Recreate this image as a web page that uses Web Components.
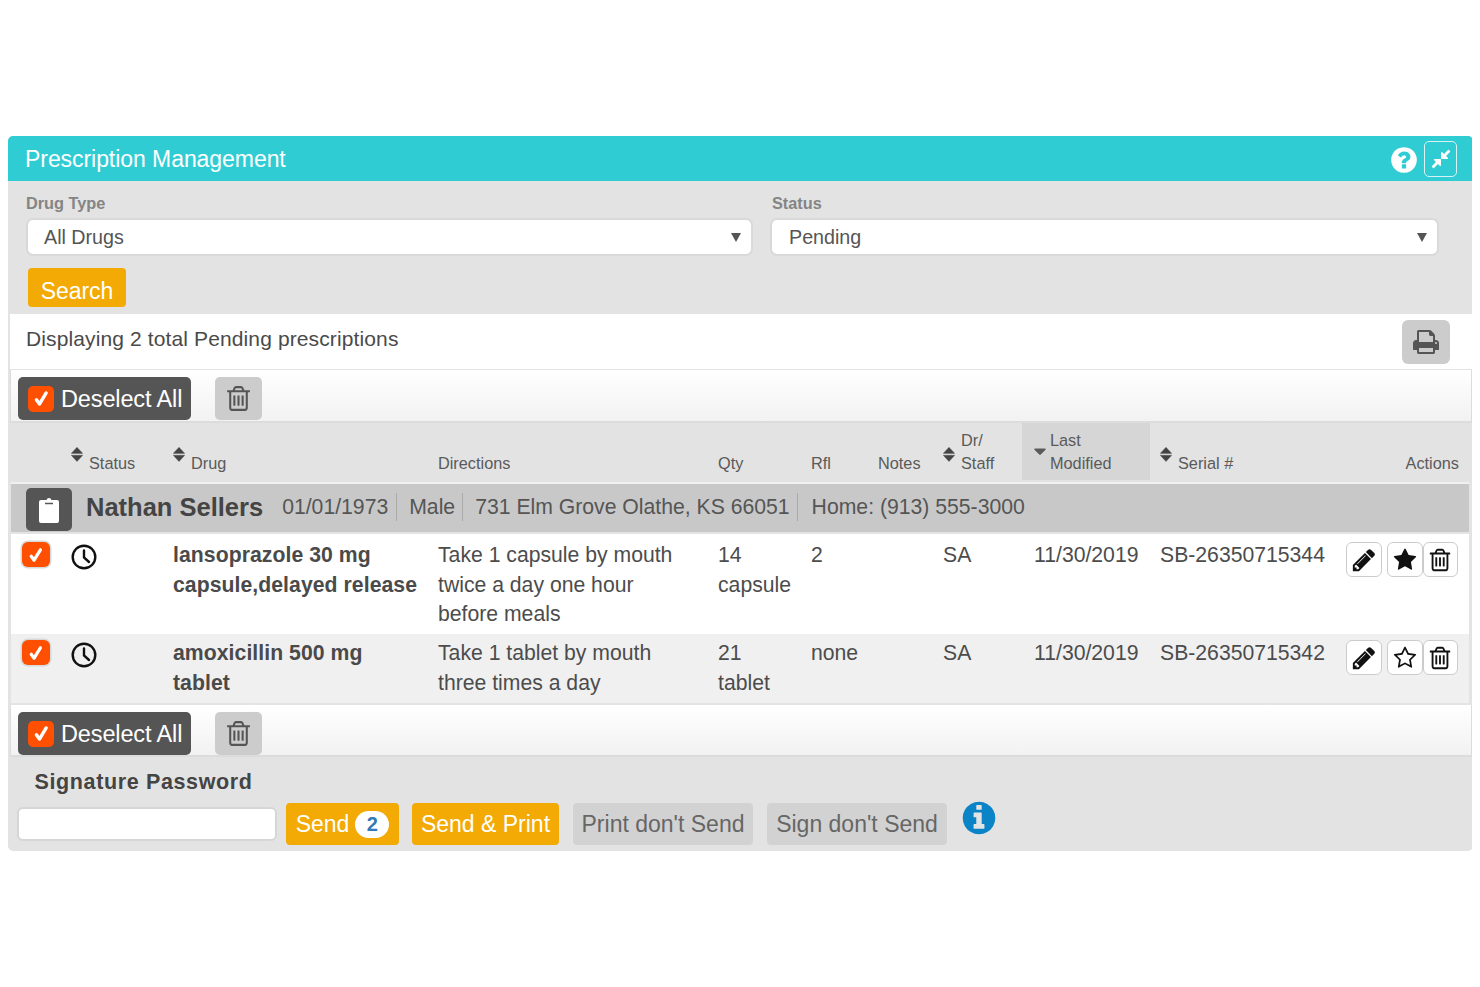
<!DOCTYPE html>
<html><head><meta charset="utf-8"><title>Prescription Management</title>
<style>
html,body{background:#fff}
body{margin:8px;font-family:"Liberation Sans",Arial,sans-serif;color:#444}
rx-panel{margin-top:128px}
</style></head><body>
<rx-panel title-text="Prescription Management">
  <rx-filters></rx-filters>
  <rx-summary text="Displaying 2 total Pending prescriptions"></rx-summary>
  <rx-toolbar></rx-toolbar>
  <rx-thead></rx-thead>
  <rx-patient name="Nathan Sellers" dob="01/01/1973" sex="Male" addr="731 Elm Grove Olathe, KS 66051" phone="Home: (913) 555-3000"></rx-patient>
  <rx-row drug="lansoprazole 30 mg capsule,delayed release" dir="Take 1 capsule by mouth twice a day one hour before meals" qty="14 capsule" rfl="2" staff="SA" date="11/30/2019" serial="SB-26350715344" star="star" h="100"></rx-row>
  <rx-row drug="amoxicillin 500 mg tablet" dir="Take 1 tablet by mouth three times a day" qty="21 tablet" rfl="none" staff="SA" date="11/30/2019" serial="SB-26350715342" star="star-o" h="69" alt></rx-row>
  <rx-toolbar second></rx-toolbar>
  <rx-footer></rx-footer>
</rx-panel>
<script>
const P={
pencil:"M491 1536l91-91-235-235-91 91v107h128v128h107zm523-928q0-22-22-22-10 0-17 7l-542 542q-7 7-7 17 0 22 22 22 10 0 17-7l542-542q7-7 7-17zm-54-192l416 416-832 832h-416v-416zm683 96q0 53-37 90l-166 166-416-416 166-165q36-38 90-38 53 0 91 38l235 234q37 39 37 91z",
star:"M1728 647q0 22-26 48l-363 354 86 500q1 7 1 20 0 21-10.5 35.5t-30.5 14.5q-19 0-40-12l-449-236-449 236q-22 12-40 12-21 0-31.5-14.5t-10.5-35.5q0-6 2-20l86-500-364-354q-25-27-25-48 0-37 56-46l502-73 225-455q19-41 49-41t49 41l225 455 502 73q56 9 56 46z",
"star-o":"M1201 1004l306-297-422-62-189-382-189 382-422 62 306 297-73 421 378-199 377 199zm527-357q0 22-26 48l-363 354 86 500q1 7 1 20 0 50-41 50-19 0-40-12l-449-236-449 236q-22 12-40 12-21 0-31.5-14.5t-10.5-35.5q0-6 2-20l86-500-364-354q-25-27-25-48 0-37 56-46l502-73 225-455q19-41 49-41t49 41l225 455 502 73q56 9 56 46z",
trash:"M704 736v576q0 14-9 23t-23 9h-64q-14 0-23-9t-9-23v-576q0-14 9-23t23-9h64q14 0 23 9t9 23zm256 0v576q0 14-9 23t-23 9h-64q-14 0-23-9t-9-23v-576q0-14 9-23t23-9h64q14 0 23 9t9 23zm256 0v576q0 14-9 23t-23 9h-64q-14 0-23-9t-9-23v-576q0-14 9-23t23-9h64q14 0 23 9t9 23zm128 724v-948h-896v948q0 22 7 40.5t14.5 27 10.5 8.5h832q3 0 10.5-8.5t14.5-27 7-40.5zm-672-1076h448l-48-117q-7-9-17-11h-317q-10 2-17 11zm928 32v64q0 14-9 23t-23 9h-96v948q0 83-47 143.5t-113 60.5h-832q-66 0-113-58.5t-47-141.5v-952h-96q-14 0-23-9t-9-23v-64q0-14 9-23t23-9h309l70-167q15-37 54-63t79-26h320q40 0 79 26t54 63l70 167h309q14 0 23 9t9 23z",
print:"M448 1536h896v-256h-896v256zm0-640h896v-384h-160q-40 0-68-28t-28-68v-160h-640v640zm1152 64q0-26-19-45t-45-19-45 19-19 45 19 45 45 19 45-19 19-45zm128 0v416q0 13-9.5 22.5t-22.5 9.5h-224v160q0 40-28 68t-68 28h-960q-40 0-68-28t-28-68v-160h-224q-13 0-22.5-9.5t-9.5-22.5v-416q0-79 56.5-135.5t135.5-56.5h64v-544q0-40 28-68t68-28h672q40 0 88 20t76 48l152 152q28 28 48 76t20 88v256h64q79 0 135.5 56.5t56.5 135.5z",
question:"M1024 1376v-192q0-14-9-23t-23-9h-192q-14 0-23 9t-9 23v192q0 14 9 23t23 9h192q14 0 23-9t9-23zm256-672q0-88-55.5-163t-138.5-116-170-41q-243 0-371 213-15 24 8 42l132 100q7 6 19 6 16 0 25-12 53-68 86-92 34-24 86-24 48 0 85.5 26t37.5 59q0 38-20 61t-68 45q-63 28-115.5 86.5t-52.5 125.5v36q0 14 9 23t23 9h192q14 0 23-9t9-23q0-19 21.5-49.5t54.5-49.5q32-18 49-28.5t46-35 44.5-48 28-60.5 12.5-81zm384 192q0 209-103 385.5t-279.5 279.5-385.5 103-385.5-103-279.5-279.5-103-385.5 103-385.5 279.5-279.5 385.5-103 385.5 103 279.5 279.5 103 385.5z",
info:"M1152 1376v-160q0-14-9-23t-23-9h-96v-512q0-14-9-23t-23-9h-320q-14 0-23 9t-9 23v160q0 14 9 23t23 9h96v320h-96q-14 0-23 9t-9 23v160q0 14 9 23t23 9h448q14 0 23-9t9-23zm-128-896v-160q0-14-9-23t-23-9h-192q-14 0-23 9t-9 23v160q0 14 9 23t23 9h192q14 0 23-9t9-23zm640 416q0 209-103 385.5t-279.5 279.5-385.5 103-385.5-103-279.5-279.5-103-385.5 103-385.5 279.5-279.5 385.5-103 385.5 103 279.5 279.5 103 385.5z",
compress:"M896 960v448q0 26-19 45t-45 19-45-19l-144-144-332 332q-10 10-23 10t-23-10l-114-114q-10-10-10-23t10-23l332-332-144-144q-19-19-19-45t19-45 45-19h448q26 0 45 19t19 45zm755-672q0 13-10 23l-332 332 144 144q19 19 19 45t-19 45-45 19h-448q-26 0-45-19t-19-45v-448q0-26 19-45t45-19 45 19l144 144 332-332q10-10 23-10t23 10l114 114q10 10 10 23z",
desc:"M1408 1088q0 26-19 45l-448 448q-19 19-45 19t-45-19l-448-448q-19-19-19-45t19-45 45-19h896q26 0 45 19t19 45z"
};
function svg(n,s,style=""){return `<svg width="${s}" height="${s}" viewBox="0 0 1792 1792" fill="currentColor" style="display:block;${style}"><path d="${P[n]}"/></svg>`}
const CHECK=(w,h,cs,extra="")=>`<span style="display:flex;align-items:center;justify-content:center;flex:none;width:${w}px;height:${h}px;background:#ff4f00;border-radius:5px;${extra}"><svg width="${cs}" height="${cs}" viewBox="0 0 20 20" fill="none" stroke="#fff" stroke-width="4" stroke-linecap="round" stroke-linejoin="round"><path d="M4 11.5l3.6 5L15.5 3.5"/></svg></span>`;
const def=(name,fn)=>customElements.define(name,class extends HTMLElement{connectedCallback(){if(!this.shadowRoot){this.attachShadow({mode:"open"}).innerHTML=fn(this)}}});
const A=(e,k)=>e.getAttribute(k)||"";
const COLS="60px 102px 265px 280px 93px 67px 65px 79px 128px 196px 1fr";

def("rx-panel",e=>`<style>
:host{display:block;width:1465px;background:#e3e3e3;border-radius:5px;overflow:hidden;height:715px}
header{height:45px;background:#30ccd3;color:#fff;display:flex;align-items:center;padding:1px 16px 0 17px;box-sizing:border-box;font-size:23px;letter-spacing:-.06px}
h1{font:inherit;margin:0;flex:1}
.h{width:26px;height:26px;margin:2px 7px 0 0}
.c{box-sizing:border-box;width:33px;height:36px;border:1.5px solid #d6f3f5;border-radius:5px;display:flex;align-items:center;justify-content:center}
</style><header><h1>${A(e,"title-text")}</h1><span class="h">${svg("question",30,"margin:-2px")}</span><span class="c">${svg("compress",22)}</span></header><slot></slot>`);

def("rx-select",e=>`<style>
:host{display:block}
label{display:block;font:bold 16.3px/19px "Liberation Sans",Arial,sans-serif;color:#858585;height:23px;padding-left:${A(e,"lp")||0}px}
div{box-sizing:border-box;height:38px;background:#fff;border:2px solid #d9d9d9;border-radius:7px;display:flex;align-items:center;justify-content:space-between;padding:0 10px 0 ${16+(+A(e,"lp")||0)/2}px;font-size:19.7px;color:#555;margin-top:1px}
svg{fill:#555}
</style><label>${A(e,"label")}</label><div><span>${A(e,"value")}</span><svg width="10" height="9" viewBox="0 0 10 9"><path d="M0 0h10L5 9z"/></svg></div>`);

def("rx-filters",()=>`<style>
:host{display:block;height:133px;box-sizing:border-box;padding:13px 33px 0 18px}
.g{display:grid;grid-template-columns:727px 669px;column-gap:17px}
button{all:unset;box-sizing:border-box;display:block;width:98px;height:39px;margin:12px 0 0 2px;background:#f3aa05;border-radius:4px;color:#fff;font:23px "Liberation Sans",Arial,sans-serif;text-align:center;padding-top:8px;letter-spacing:-.1px}
</style><div class="g"><rx-select label="Drug Type" value="All Drugs"></rx-select><rx-select label="Status" lp="2" value="Pending"></rx-select></div><button>Search</button>`);

def("rx-summary",e=>`<style>
:host{display:flex;align-items:center;justify-content:space-between;height:55px;background:#fff;margin:0 1px 0 2px;padding:0 22px 0 16px;font-size:21px;color:#4a4a4a;letter-spacing:.12px}
span{padding-bottom:5px}
b{display:flex;align-items:center;justify-content:center;width:48px;height:44px;background:#ccc;border-radius:6px;color:#555;margin-top:1px}
</style><span>${A(e,"text")}</span><b>${svg("print",28)}</b>`);

def("rx-toolbar",e=>`<style>
:host{display:flex;align-items:flex-start;box-sizing:border-box;height:${e.hasAttribute("second")?52:53}px;margin:${e.hasAttribute("second")?2:1}px 1px 0 2px;border:1px solid #dcdcdc;border-width:0 1px 2px 1px;background:linear-gradient(#fff,#f2f2f2);padding:7px 0 0 7px}
.d{display:flex;align-items:center;box-sizing:border-box;width:173px;height:43px;background:#555;border-radius:5px;color:#fff;font-size:23.5px;letter-spacing:-.13px;padding-left:10px;gap:7px}
.d span:last-child{padding-top:1px}
.t{display:flex;align-items:center;justify-content:center;width:47px;height:43px;background:#ccc;border-radius:5px;margin-left:24px;color:#555}
</style><span class="d">${CHECK(26,26,17)}<span>Deselect All</span></span><span class="t">${svg("trash",29)}</span>`);

def("rx-thead",()=>{
 const S=`<span class="s"><svg width="12" height="15" viewBox="0 0 12 15" fill="currentColor" style="display:block;margin:1.5px 0 0 .2px"><path d="M6 .2l5.8 6.2H.2zM6 14.6L.2 8.2h11.6z" stroke="currentColor" stroke-width=".3" stroke-linejoin="round"/></svg></span>`;
 return `<style>
:host{display:grid;grid-template-columns:${COLS};height:61px;box-sizing:border-box;margin:0 4px 0 3px;background:#e3e3e3;border-bottom:2px solid #f0f0f0;font-size:16.3px;line-height:23px;color:#5a5a5a}
div{display:flex;align-items:flex-end;padding-bottom:7px}
.s{color:#444;margin:0 4px 12px 0;width:14px;height:18px;flex:none}
.cur{background:#d6d6d6;margin-bottom:2px;padding-bottom:5px;padding-left:10px}
.r{justify-content:flex-end;padding-right:10px}
</style><div></div><div>${S}Status</div><div>${S}Drug</div><div>Directions</div><div>Qty</div><div>Rfl</div><div>Notes</div><div>${S}<span>Dr/<br>Staff</span></div><div class="cur">${svg("desc",20,"margin:0 0 11px -2px;transform:translateY(-7px);flex:none")}<span>Last<br>Modified</span></div><div style="padding-left:10px">${S}Serial #</div><div class="r">Actions</div>`});

def("rx-patient",e=>`<style>
:host{display:flex;align-items:center;height:48px;margin:0 4px 2px 3px;background:#c8c8c8;font-size:21.2px;color:#555}
.i{display:flex;align-items:center;justify-content:center;width:46px;height:43px;background:#555;border-radius:5px;margin:3px 14px 0 15px;color:#fff;flex:none}
b{font-size:25.5px;color:#444;margin:0 19px 2px 0}
.x{padding:0 8px 0 0;margin:0 12px 2px 0;border-right:1.5px solid #aaa;line-height:28px}
.l{margin-bottom:2px}
</style><span class="i"><svg width="22" height="28" viewBox="0 0 22 28" fill="currentColor"><path d="M3 4h5.5a2.6 2.6 0 0 1 5 0H19a2 2 0 0 1 2 2v19a2 2 0 0 1-2 2H3a2 2 0 0 1-2-2V6a2 2 0 0 1 2-2z"/><path d="M7 7.5h8" stroke="#555" stroke-width="1.5"/></svg></span><b>${A(e,"name")}</b><span class="x">${A(e,"dob")}</span><span class="x" style="padding-right:7px">${A(e,"sex")}</span><span class="x" style="padding-right:7px;margin-right:14px">${A(e,"addr")}</span><span class="l">${A(e,"phone")}</span>`);

def("rx-row",e=>{const alt=e.hasAttribute("alt");return `<style>
:host{display:grid;grid-template-columns:${COLS};height:${A(e,"h")}px;margin:0 4px 0 3px;box-sizing:border-box;background:${alt?"#f0f0f0":"#fff"};font-size:21.2px;line-height:29.5px;color:#4c4c4c;padding-top:${alt?4:6}px}
.pad{padding-left:10px}
.dr{font-weight:bold;color:#4a4a4a;letter-spacing:.06px;padding-right:18px}
.dir{padding-right:30px}
.q{padding-right:20px}
.ck{padding:2px 0 0 11px}
.cl{margin:4px 0 0 -.5px}
.a{display:flex;align-items:flex-start;margin-top:2px}
.b{box-sizing:border-box;width:35.5px;height:35px;border:1.5px solid #ccc;border-radius:6px;background:#fff;display:flex;align-items:center;justify-content:center;color:#111;flex:none}
.b+.b{margin-left:5.5px}.b.t{margin-left:0}
.da{padding-left:12px}
</style>
<div class="ck">${CHECK(28,25,16,"box-shadow:0 0 0 1.5px #d8d8d8;border-radius:6px")}</div>
<div class="cl"><svg width="26" height="26" viewBox="0 0 26 26" fill="none" stroke="#111" stroke-width="2.4" style="display:block"><circle cx="13" cy="13" r="11.3"/><path d="M13 6.5V13.5L18 18" stroke-linecap="round"/></svg></div>
<div class="dr">${A(e,"drug")}</div><div class="dir">${A(e,"dir")}</div><div class="q">${A(e,"qty")}</div><div>${A(e,"rfl")}</div><div></div><div>${A(e,"staff")}</div><div class="da">${A(e,"date")}</div><div class="pad">${A(e,"serial")}</div>
<div class="a"><span class="b">${svg("pencil",26)}</span><span class="b">${svg(A(e,"star"),24)}</span><span class="b t">${svg("trash",26)}</span></div>`});

def("rx-btn",e=>`<style>
:host{display:flex;align-items:center;justify-content:center;box-sizing:border-box;height:42px;border-radius:4px;font-size:23px;white-space:pre;background:${e.hasAttribute("muted")?"#d2d2d2":"#f3aa05"};color:${e.hasAttribute("muted")?"#666":"#fff"};width:${A(e,"w")}px;gap:6px;flex:none}
i{font:bold 20px "Liberation Sans",Arial,sans-serif;background:#fff;color:#337ab7;border-radius:16px;width:34px;height:27px;display:flex;align-items:center;justify-content:center}
</style><span>${A(e,"text")}</span>${A(e,"badge")?`<i>${A(e,"badge")}</i>`:""}`);

def("rx-footer",()=>`<style>
:host{display:block;padding:12px 0 0 9px}
h2{font:bold 21.5px/26px "Liberation Sans",Arial,sans-serif;margin:0 0 8px 17.5px;color:#444;letter-spacing:.63px}
.r{display:flex;align-items:flex-start}
.in{box-sizing:border-box;width:260px;height:34px;background:#fff;border:2px solid #d6d6d6;border-radius:6px;margin:4px 9px 0 0;flex:none}
.m{margin-left:14px}.s{margin-left:13px}
.inf{color:#0a84c6;margin:-2px 0 0 16px}
</style><h2>Signature Password</h2><div class="r"><span class="in"></span><rx-btn text="Send" badge="2" w="113"></rx-btn><rx-btn class="s" text="Send &amp; Print" w="147"></rx-btn><rx-btn class="m" muted text="Print don't Send" w="180"></rx-btn><rx-btn class="m" muted text="Sign don't Send" w="180"></rx-btn><span class="inf">${svg("info",38,"margin:-2px -3px")}</span></div>`);
</script></body></html>
